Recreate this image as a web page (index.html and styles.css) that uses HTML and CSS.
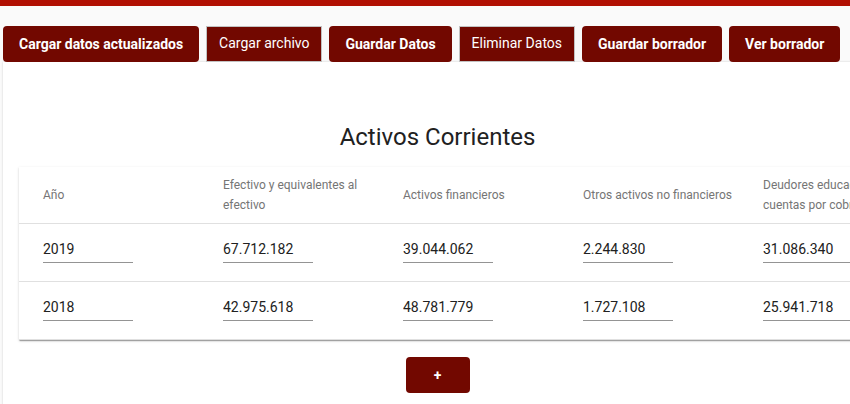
FILE: index.html
```html
<!DOCTYPE html>
<html lang="es">
<head>
<meta charset="utf-8">
<title>Activos Corrientes</title>
<link rel="stylesheet" href="styles.css">
</head>
<body>
<div class="topbar"></div>
<div class="page">
  <div class="toolbar">
    <button class="btn btn-strong">Cargar datos actualizados</button>
    <button class="btn btn-plain">Cargar archivo</button>
    <button class="btn btn-strong">Guardar Datos</button>
    <button class="btn btn-plain">Eliminar Datos</button>
    <button class="btn btn-strong">Guardar borrador</button>
    <button class="btn btn-strong">Ver borrador</button>
  </div>
  <main class="panel">
    <h1 class="title">Activos Corrientes</h1>
    <div class="card">
      <div class="row head">
        <div class="cell">Año</div>
        <div class="cell">Efectivo y equivalentes al efectivo</div>
        <div class="cell">Activos financieros</div>
        <div class="cell">Otros activos no financieros</div>
        <div class="cell">Deudores educacionales y otras cuentas por cobrar</div>
      </div>
      <div class="row body">
        <div class="cell"><input class="field" value="2019"></div>
        <div class="cell"><input class="field" value="67.712.182"></div>
        <div class="cell"><input class="field" value="39.044.062"></div>
        <div class="cell"><input class="field" value="2.244.830"></div>
        <div class="cell"><input class="field" value="31.086.340"></div>
      </div>
      <div class="row body">
        <div class="cell"><input class="field" value="2018"></div>
        <div class="cell"><input class="field" value="42.975.618"></div>
        <div class="cell"><input class="field" value="48.781.779"></div>
        <div class="cell"><input class="field" value="1.727.108"></div>
        <div class="cell"><input class="field" value="25.941.718"></div>
      </div>
    </div>
    <div class="actions">
      <button class="btn btn-strong btn-add">+</button>
    </div>
  </main>
</div>
</body>
</html>
```
FILE: styles.css
```css
html, body {
  margin: 0;
  padding: 0;
  overflow: hidden;
  background: #fafafa;
  font-family: Roboto, "Liberation Sans", sans-serif;
}

.topbar {
  height: 6px;
  background: #b10f02;
}

.page {
  padding: 0 3px;
}

.toolbar {
  display: flex;
  gap: 7px;
  margin-top: 20px;
  height: 36px;
}

.btn {
  height: 36px;
  box-sizing: border-box;
  background: #720800;
  color: #fff;
  font-family: Roboto, "Liberation Sans", sans-serif;
  font-size: 14px;
  cursor: pointer;
  white-space: nowrap;
}

.btn-strong {
  border: none;
  border-radius: 4px;
  padding: 0 16px;
  font-weight: 700;
}

.btn-plain {
  border: 1px solid #c2c2c2;
  border-radius: 0;
  padding: 0 12px 2px;
  font-weight: 400;
}

.panel {
  width: 869px;
  min-height: 400px;
  background: #fff;
  box-shadow: 0 0 2px rgba(0, 0, 0, 0.18);
  padding: 0 16px;
  box-sizing: border-box;
}

.title {
  margin: 0;
  padding-top: 59px;
  font-size: 24px;
  line-height: 32px;
  font-weight: 400;
  color: #212121;
  text-align: center;
}

.card {
  margin-top: 14px;
  background: #fff;
  overflow: hidden;
  box-shadow: 0 2px 1px -1px rgba(0, 0, 0, 0.2), 0 1px 1px 0 rgba(0, 0, 0, 0.14), 0 1px 3px 0 rgba(0, 0, 0, 0.12);
}

.row {
  display: grid;
  grid-template-columns: repeat(4, 180px) 210px;
  border-bottom: 1px solid #e0e0e0;
}

.row.head {
  height: 56px;
  align-items: center;
}

.row.head .cell {
  font-size: 12px;
  line-height: 20px;
  color: #757575;
}

.row.body {
  height: 57px;
}

.cell {
  padding-left: 24px;
}

.row.body .cell {
  padding-top: 15px;
}

.field {
  display: block;
  width: 90px;
  height: 20px;
  box-sizing: content-box;
  padding: 0 0 3px 0;
  margin: 0;
  border: none;
  border-bottom: 1px solid #949494;
  background: transparent;
  font-family: Roboto, "Liberation Sans", sans-serif;
  font-size: 14px;
  line-height: 20px;
  color: #212121;
  outline: none;
}

.actions {
  display: flex;
  justify-content: center;
  margin-top: 17px;
}

.btn-add {
  min-width: 64px;
}
```
